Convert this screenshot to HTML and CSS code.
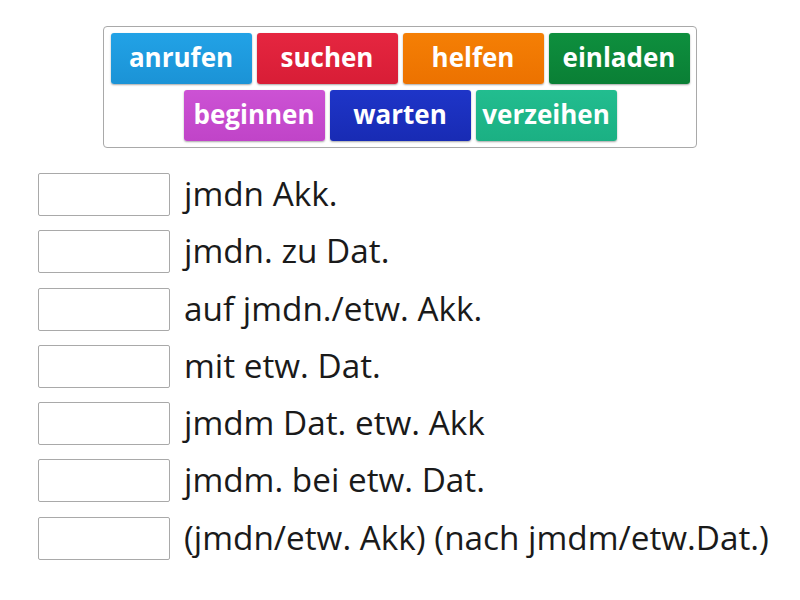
FILE: index.html
```html
<!DOCTYPE html>
<html lang="de">
<head>
<meta charset="utf-8">
<title>Verben mit Ergänzungen</title>
<link rel="stylesheet" href="styles.css">
</head>
<body>
<div class="bank">
  <div class="tile blue">anrufen</div>
  <div class="tile red">suchen</div>
  <div class="tile orange">helfen</div>
  <div class="tile green">einladen</div>
  <div class="tile purple">beginnen</div>
  <div class="tile navy">warten</div>
  <div class="tile teal">verzeihen</div>
</div>
<div class="rows">
  <div class="row"><div class="slot"></div><div class="label">jmdn Akk.</div></div>
  <div class="row"><div class="slot"></div><div class="label">jmdn. zu Dat.</div></div>
  <div class="row"><div class="slot"></div><div class="label">auf jmdn./etw. Akk.</div></div>
  <div class="row"><div class="slot"></div><div class="label">mit etw. Dat.</div></div>
  <div class="row"><div class="slot"></div><div class="label">jmdm Dat. etw. Akk</div></div>
  <div class="row"><div class="slot"></div><div class="label">jmdm. bei etw. Dat.</div></div>
  <div class="row"><div class="slot"></div><div class="label">(jmdn/etw. Akk) (nach jmdm/etw.Dat.)</div></div>
</div>
</body>
</html>
```
FILE: styles.css
```css
html, body {
  margin: 0;
  padding: 0;
  background: #ffffff;
}
body {
  font-family: "Open Sans", "Noto Sans", sans-serif;
  color: #1a1a1a;
  width: 800px;
  height: 600px;
  overflow: hidden;
}
.bank {
  box-sizing: border-box;
  width: 594px;
  margin: 26px 0 0 103px;
  padding: 6px;
  border: 1px solid #a9a9a9;
  border-radius: 4px;
  display: flex;
  flex-wrap: wrap;
  justify-content: center;
  gap: 6px 5px;
}
.tile {
  box-sizing: border-box;
  width: 141px;
  height: 51px;
  border-radius: 3px;
  color: #ffffff;
  font-weight: 700;
  font-size: 26px;
  display: flex;
  align-items: center;
  justify-content: center;
  padding-bottom: 4px;
  box-shadow: 0 1px 2px rgba(0, 0, 0, 0.35);
}
.blue { background: linear-gradient(#22a2e6, #1b93d6); }
.red { background: linear-gradient(#e52640, #d81d36); }
.orange { background: linear-gradient(#f57f05, #ec7200); }
.green { background: linear-gradient(#0e8f3e, #0a7f35); }
.purple { background: linear-gradient(#cc52d4, #c044c8); }
.navy { background: linear-gradient(#1e35c8, #182bb4); }
.teal { background: linear-gradient(#22bd8f, #1bb083); }
.rows {
  margin: 25px 0 0 38px;
  display: flex;
  flex-direction: column;
  gap: 14.3px;
}
.row {
  display: flex;
  align-items: center;
  gap: 14px;
  height: 43px;
}
.slot {
  box-sizing: border-box;
  width: 132px;
  height: 43px;
  border: 1px solid #a9a9a9;
  border-radius: 2px;
  background: #fff;
  flex: none;
}
.label {
  font-size: 33.3px;
  line-height: 43px;
  white-space: nowrap;
  padding-bottom: 2px;
}
```
